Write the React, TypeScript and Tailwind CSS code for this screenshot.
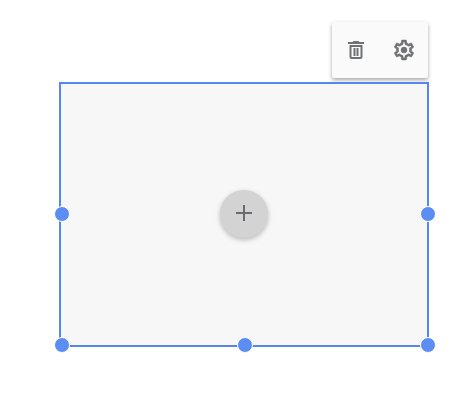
const Handle = ({ className }: { className: string }) => (
  <span className={`absolute h-[16px] w-[16px] rounded-full border border-white bg-[#5b8df3] ${className}`} />
);

export default function App() {
  return (
    <div className="h-[402px] w-[455px] overflow-hidden bg-white pl-[59px] pr-[26px] pt-[22px]">
      <div className="flex justify-end pr-[1px]">
        <div className="flex h-[56px] w-[96px] items-center justify-center gap-[24px] rounded-[2px] bg-[#fafafa] shadow-[0_2px_4px_rgba(0,0,0,0.35)]">
          <svg width="24" height="24" viewBox="0 0 24 24" fill="#6f7174" fillRule="evenodd">
            <path d="M4 4h4.5l1-1h5l1 1H20v2H4z" />
            <path d="M5.5 7h13v12c0 1.1-.9 2-2 2h-9c-1.1 0-2-.9-2-2zM7.5 9v10h9V9z" />
            <path d="M9.5 10h2v8h-2zM12.5 10h2v8h-2z" />
          </svg>
          <svg width="24" height="24" viewBox="0 0 24 24" fill="#6f7174" stroke="#6f7174" strokeWidth="0.5">
            <path d="M19.43 12.98c.04-.32.07-.64.07-.98 0-.34-.03-.66-.07-.98l2.11-1.65c.19-.15.24-.42.12-.64l-2-3.46c-.09-.16-.26-.25-.44-.25-.06 0-.12.01-.17.03l-2.49 1c-.52-.4-1.08-.73-1.69-.98l-.38-2.65C14.46 2.18 14.25 2 14 2h-4c-.25 0-.46.18-.49.42l-.38 2.65c-.61.25-1.17.59-1.69.98l-2.49-1c-.06-.02-.12-.03-.18-.03-.17 0-.34.09-.43.25l-2 3.46c-.13.22-.07.49.12.64l2.11 1.65c-.04.32-.07.65-.07.98 0 .33.03.66.07.98l-2.11 1.65c-.19.15-.24.42-.12.64l2 3.46c.09.16.26.25.44.25.06 0 .12-.01.17-.03l2.49-1c.52.4 1.08.73 1.69.98l.38 2.65c.03.24.24.42.49.42h4c.25 0 .46-.18.49-.42l.38-2.65c.61-.25 1.17-.59 1.69-.98l2.49 1c.06.02.12.03.18.03.17 0 .34-.09.43-.25l2-3.46c.12-.22.07-.49-.12-.64l-2.11-1.65zm-1.98-1.71c.04.31.05.52.05.73 0 .21-.02.43-.05.73l-.14 1.13.89.7 1.08.84-.7 1.21-1.27-.51-1.04-.42-.9.68c-.43.32-.84.56-1.25.73l-1.06.43-.16 1.13-.2 1.35h-1.4l-.19-1.35-.16-1.13-1.06-.43c-.43-.18-.83-.41-1.23-.71l-.91-.7-1.06.43-1.27.51-.7-1.21 1.08-.84.89-.7-.14-1.13c-.03-.31-.05-.54-.05-.74s.02-.43.05-.73l.14-1.13-.89-.7-1.08-.84.7-1.21 1.27.51 1.04.42.9-.68c.43-.32.84-.56 1.25-.73l1.06-.43.16-1.13.2-1.35h1.39l.19 1.35.16 1.13 1.06.43c.43.18.83.41 1.23.71l.91.7 1.06-.43 1.27-.51.7 1.21-1.07.85-.89.7.14 1.13z" />
            <circle cx="12" cy="12" r="3" />
          </svg>
        </div>
      </div>
      <div className="relative mt-[4px] flex h-[265px] w-[370px] items-center justify-center border-2 border-[#5587ee] bg-[#f7f7f7] pb-[1px]">
        <div className="flex h-[48px] w-[48px] items-center justify-center rounded-full bg-[#d3d3d3] shadow-[0_2px_5px_rgba(0,0,0,0.25)]">
          <svg width="24" height="24" viewBox="0 1 24 24" fill="#696b6e">
            <path d="M20 13h-7v7h-2v-7H4v-2h7V4h2v7h7z" />
          </svg>
        </div>
        <Handle className="left-[-7px] top-[122px]" />
        <Handle className="right-[-9px] top-[122px]" />
        <Handle className="bottom-[-8px] left-[-7px]" />
        <Handle className="bottom-[-8px] left-[176px]" />
        <Handle className="bottom-[-8px] right-[-9px]" />
      </div>
    </div>
  );
}
